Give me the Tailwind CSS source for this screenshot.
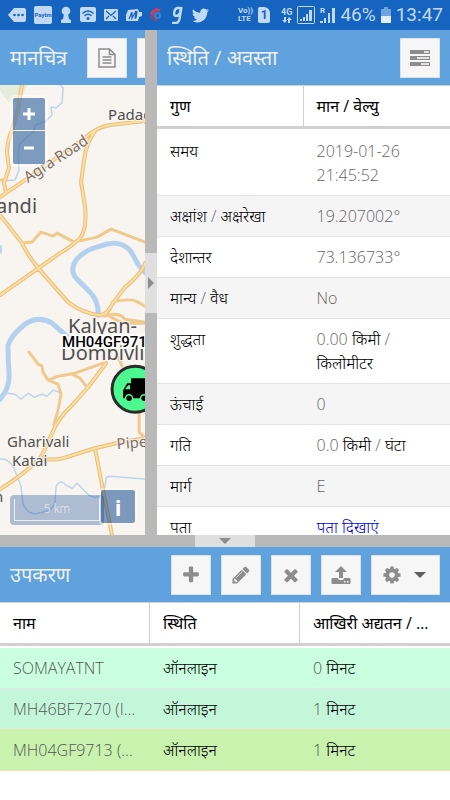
<!DOCTYPE html>
<html lang="hi">
<head>
    <meta charset="UTF-8">
    <meta name="viewport" content="width=device-width, initial-scale=1.0">
    <title>मानचित्र</title>
    <script src="https://cdn.jsdelivr.net/npm/@tailwindcss/browser@4"></script>
    <style>
        body { font-family: 'Open Sans', 'Noto Sans Devanagari', 'Noto Sans', sans-serif; }
    </style>
</head>
<body class="h-screen flex flex-col bg-white text-base leading-6 text-black overflow-hidden">
    <!-- Phone status bar -->
    <div class="h-[30px] shrink-0 flex items-center justify-between pl-2 pr-[7px] bg-[#1464c0] text-[#c2d9f3] font-['Roboto',sans-serif]">
        <div class="flex items-center gap-2">
            <svg class="w-[18px] h-4" viewBox="0 0 18 16" fill="currentColor"><path d="M6 1h10q2 0 2 2v10q0 2-2 2H6L0 8z"/><g fill="#1464c0"><circle cx="6.500" cy="8" r="1.300"/><circle cx="10.500" cy="8" r="1.300"/><circle cx="14.500" cy="8" r="1.300"/></g></svg>
            <span class="w-[18px] h-[18px] rounded-xs bg-[#c2d9f3] text-[#1464c0] text-[6px] font-bold flex items-center justify-center">Paytm</span>
            <svg class="w-3 h-[18px]" viewBox="0 0 12 18" fill="currentColor"><circle cx="6" cy="5" r="4.300"/><path d="M4 8h4l1 5 2 1v3H1v-3l2-1z"/></svg>
            <svg class="w-4 h-4" viewBox="0 0 16 16"><rect width="16" height="15" rx="2" fill="currentColor"/><g fill="none" stroke="#1464c0" stroke-width="1.400"><path d="M2.500 6.500q5.500-5 11 0M4.500 8.800q3.500-3 7 0"/></g><circle cx="8" cy="11.500" r="1.500" fill="#1464c0"/></svg>
            <svg class="w-3.5 h-3" viewBox="0 0 14 12"><rect width="14" height="12" rx="1" fill="currentColor"/><path d="M2 2l5 4.500L12 2M2 10l3-3M12 10L9 7" fill="none" stroke="#1464c0" stroke-width="1.300"/></svg>
            <svg class="w-4 h-3.5" viewBox="0 0 16 14"><path d="M2 2l10-1 1 3h3v4l-3 1-1 4H0V7z" fill="currentColor"/><path d="M3 11l3-7v6l4-7-1 8M11 3l-1 7" fill="none" stroke="#1464c0" stroke-width="1.200"/></svg>
            <svg class="w-3 h-3.5" viewBox="0 0 12 14" fill="none" stroke-width="3"><path d="M10 3A5 5 0 0 0 2 8" stroke="#c83f5d"/><path d="M2 7a5 5 0 0 0 5 5" stroke="#93426f"/><circle cx="7.500" cy="7.500" r="2.500" stroke="#3b82cc" stroke-width="2"/></svg>
            <svg class="w-3.5 h-[18px]" viewBox="0 0 14 18" fill="none" stroke="currentColor" stroke-width="2.400"><path d="M10 2H8Q5 2 4.300 6T6 10q2.500 0 4-3l1.200-6M11.500 1L9.500 13q-.8 4-4 4H2"/></svg>
            <svg class="w-[17px] h-[17px]" viewBox="0 0 24 24" fill="currentColor"><path d="M23.950 4.570a10 10 0 0 1-2.820.77 4.960 4.960 0 0 0 2.160-2.720c-.95.56-2 .96-3.120 1.190a4.920 4.920 0 0 0-8.390 4.480C7.690 8.090 4.070 6.130 1.640 3.160a4.900 4.900 0 0 0 1.520 6.570 4.900 4.900 0 0 1-2.230-.61v.06a4.920 4.920 0 0 0 3.950 4.830 5 5 0 0 1-2.210.08 4.940 4.940 0 0 0 4.600 3.420A9.870 9.870 0 0 1 0 19.540a13.990 13.990 0 0 0 7.550 2.210c9.050 0 14-7.500 14-13.980 0-.21 0-.42-.02-.63a9.940 9.940 0 0 0 2.460-2.550z"/></svg>
        </div>
        <div class="flex items-center gap-[5px]">
            <span class="text-[8px] leading-[8px] font-bold">Vo))<br>LTE</span>
            <span class="w-3 h-4 rounded-xs rounded-tr-md bg-[#c2d9f3] text-[#1464c0] text-xs leading-4 font-bold text-center">1</span>
            <span class="pl-1.5 text-[9px] leading-[9px] font-bold text-center">4G<svg class="w-2.5 h-1.5 mx-auto" viewBox="0 0 10 6" fill="currentColor"><path d="M2 0h2v3h1L3 6 0 3h2zM6 6h2V3h2L7 0 5 3h1z"/></svg></span>
            <svg class="w-[18px] h-[18px]" viewBox="0 0 18 18" fill="currentColor"><rect x=".5" y=".5" width="17" height="17" rx="1" fill="none" stroke="currentColor"/><path d="M3 15v-2h2v2zM6 15v-4h2v4zM9 15V8h2v7zM12 15V4h3v11z"/></svg>
            <svg class="w-[15px] h-[18px]" viewBox="0 0 15 18"><path d="M0 17v-2h3v2zM4 17v-5h2v5zM8 17V7h2v10zM12 17V2h3v15z" fill="currentColor"/><text x="0" y="7" font-size="8" font-weight="700" fill="currentColor">R</text></svg>
            <span class="text-[19px] leading-6">46%</span>
            <svg class="w-2.5 h-4" viewBox="0 0 10 16"><path d="M3 0h4v2h3v14H0V2h3z" fill="#6ea3de"/><path d="M0 9h10v7H0z" fill="#e4eefa"/></svg>
            <span class="text-[19px] leading-6">13:47</span>
        </div>
    </div>

    <div class="flex-2 min-h-0 flex">
        <!-- Map -->
        <section class="w-[145px] shrink-0 flex flex-col overflow-hidden">
            <header class="h-[55px] shrink-0 flex items-center gap-2.5 px-2.5 bg-[#5fa2dd]">
                <h2 class="w-[67px] shrink-0 text-xl text-[#f0f0f0] whitespace-nowrap">मानचित्र</h2>
                <button type="button" aria-label="रिपोर्ट" class="w-10 h-10 shrink-0 flex items-center justify-center bg-[#f6f6f6] border border-[#e0e0e0] text-[#8d8d8d]">
                    <svg class="w-[18px] h-5" viewBox="0 0 18 20" fill="none" stroke="currentColor" stroke-width="1.500"><path d="M1 1h10.500L17 6.500V19H1zM11.500 1v5.500H17M4.500 9h9M4.500 12h9M4.500 15h9"/></svg>
                </button>
                <button type="button" aria-label="सेटिंग" class="w-10 h-10 shrink-0 bg-[#f6f6f6] border border-[#e0e0e0]"></button>
            </header>
            <div class="relative flex-1 min-h-0 bg-[#f8f4f0]">
                <svg class="w-full h-full" viewBox="0 0 145 450" preserveAspectRatio="xMinYMin slice" fill="none" stroke-linejoin="round" stroke-linecap="round">
                    <path d="M0 0H27Q24 14 12 19Q4 14 0 5z" fill="#e6ecd9"/>
                    <!-- rivers -->
                    <g stroke="#b3d1ee" stroke-width="5">
                        <path d="M98 230Q99 217 90 207L77 194Q69 186 76 175Q84 165 100 161Q118 154 129 164C136 173 137 182 146 188"/>
                        <path d="M0 314Q10 303 9 288T8 260Q11 250 25 239Q38 230 52 238L69 253"/>
                    </g>
                    <g stroke="#bdd5ec" stroke-width="1.500">
                        <path d="M60 0l3 3-1 15-6 5-5-1 1 8-6 6-10 4-3 7-6 5-8 8-1 12 1 13-4 10-13 1"/>
                        <path d="M0 313l7-5 8 1 6 5 7-6 6 4 8-3 5 2 6-6 7 2M0 374q8-2 14 9l7 18 2 18q6 13 19 8 10-1 13-10l1-16q5-8 10-1l6 3 5-5 12 12q16 8 17-18l4-1 37 3"/>
                        <path d="M0 162v5" stroke-width="4"/>
                    </g>
                    <!-- roads, casing under fill -->
                    <g stroke="#e9bd7c" stroke-width="4">
                        <path d="M0 112L25 95L86 52Q97 42 110 40L145 36M95 46Q86 58 84 75L81 97L85 122Q87 144 80 153Q72 161 60 168L0 210M22 0Q20 12 18 24L12 45Q7 56 7 68L9 83L4 98L6 108M0 130L22 158Q28 171 39 184L68 217Q84 229 100 230Q108 229 112 219L125 202Q142 188 145 178"/>
                        <path d="M106 278L88 302L72 320Q58 333 52 348L42 370Q31 384 0 404M40 373Q56 376 66 372L95 363L120 357L145 353M95 363L102 400L112 450"/>
                    </g>
                    <g stroke="#efc98e" stroke-width="3">
                        <path d="M22 158l10-1 9-10 12 4 4-3 17 9 23-5 14-8 34 13M0 95h6M112 217q16-4 24-1l9 5M104 231q14-5 21 3l20 3M106 229q10 6 18 9h21M29 267l9 12 4 2 1 6 5 8 10-4 17-3 28-10M48 295l10 4 3 10-3 16-4 14M72 289l8 4 7 9M139 325v22l6 5M118 272l4 9"/>
                    </g>
                    <g stroke="#fadf9f" stroke-width="2">
                        <path d="M0 112L25 95L86 52Q97 42 110 40L145 36M95 46Q86 58 84 75L81 97L85 122Q87 144 80 153Q72 161 60 168L0 210M22 0Q20 12 18 24L12 45Q7 56 7 68L9 83L4 98L6 108M0 130L22 158Q28 171 39 184L68 217Q84 229 100 230Q108 229 112 219L125 202Q142 188 145 178"/>
                        <path d="M106 278L88 302L72 320Q58 333 52 348L42 370Q31 384 0 404M40 373Q56 376 66 372L95 363L120 357L145 353M95 363L102 400L112 450"/>
                    </g>
                    <!-- place names -->
                    <g fill="#505050" stroke="#f8f4f0" stroke-width="2" paint-order="stroke" font-family="Noto Sans">
                        <text x="108" y="35" font-size="15">Padagha</text>
                        <text x="-4" y="128" font-size="20">andi</text>
                        <text x="68" y="248" font-size="20">Kalyan-</text>
                        <text x="61" y="275" font-size="20">Dombivli</text>
                        <text x="7" y="362" font-size="15">Gharivali</text>
                        <text x="12" y="381" font-size="15">Katai</text>
                        <text x="-6" y="417" font-size="15">n</text>
                        <text transform="translate(28 98) rotate(-33)" fill="#7c6f65" font-size="15">Agra Road</text>
                        <text transform="translate(117 364) rotate(-5)" fill="#7c6f65" font-size="15">Pipeline</text>
                    </g>
                    <!-- vehicle marker -->
                    <circle cx="135" cy="304" r="23" fill="#4dfa90" stroke="#2b2b2b" stroke-width="3"/>
                    <path d="M131 293h24v20h-32v-8l4-7h4z" fill="#000"/>
                    <path d="M125 304l3-4h2v4z" fill="#4dfa90"/>
                    <g fill="#000" stroke="#4dfa90" stroke-width="1.500"><circle cx="129" cy="313" r="3.500"/><circle cx="144" cy="313" r="3.500"/></g>
                    <text x="62" y="262" font-size="15" font-weight="500" font-family="Roboto" fill="#000" stroke="#fff" stroke-width="4" paint-order="stroke">MH04GF9713</text>
                </svg>
                <div class="absolute left-2.5 top-2.5 p-[3px] rounded bg-white/40 flex flex-col gap-px text-white">
                    <button type="button" class="w-8 h-8 rounded-t-xs bg-[#003c88]/50 flex items-center justify-center" aria-label="Zoom in"><svg class="w-3 h-3" viewBox="0 0 12 12" fill="currentColor"><path d="M4.500 0h3v4.500H12v3H7.500V12h-3V7.500H0v-3h4.500z"/></svg></button>
                    <button type="button" class="w-8 h-[33px] rounded-b-xs bg-[#003c88]/50 flex items-center justify-center" aria-label="Zoom out"><svg class="w-3 h-3" viewBox="0 0 12 12" fill="currentColor"><path d="M1 4.500h10v3H1z"/></svg></button>
                </div>
                <div class="absolute left-2.5 bottom-2.5 w-[94px] h-[30px] rounded bg-[#003c88]/30 p-1">
                    <div class="h-[22px] border border-t-0 border-[#eee] text-xs leading-5 text-center text-[#eee] font-light">5 km</div>
                </div>
                <button type="button" class="absolute right-2 bottom-2.5 w-[38px] h-[37px] rounded border-2 border-white/40 bg-[#003c88]/50 bg-clip-padding text-[22px] leading-6 font-bold text-white" aria-label="Attributions">i</button>
            </div>
        </section>

        <div class="w-3 shrink-0 flex items-center bg-[#b9b9b9]">
            <button type="button" aria-label="Collapse" class="w-3 h-15 flex items-center justify-center bg-[#dfdfdf] text-[#8c8c8c]"><svg class="w-1.5 h-3" viewBox="0 0 6 12" fill="currentColor"><path d="M0 0l6 6-6 6z"/></svg></button>
        </div>

        <!-- State -->
        <section class="flex-1 min-w-0 flex flex-col overflow-hidden">
            <header class="h-[55px] shrink-0 flex items-center justify-between px-2.5 bg-[#5fa2dd]">
                <h2 class="text-xl text-[#f0f0f0]">स्थिति / अवस्ता</h2>
                <button type="button" aria-label="विशेषताएँ" class="w-10 h-10 flex items-center justify-center bg-[#f6f6f6] border border-[#e0e0e0] text-[#8d8d8d]">
                    <svg class="w-5 h-4" viewBox="0 0 20 16"><path d="M0 0h20v4H0zM0 6h20v4H0zM0 12h20v4H0z" fill="currentColor"/><path d="M14 1h5v2h-5zM7 7h12v2H7zM11 13h8v2h-8z" fill="#e2e2e2"/></svg>
                </button>
            </header>
            <table class="w-full table-fixed border-separate border-spacing-0 text-left border-t border-[#d0d0d0]">
                <thead>
                    <tr>
                        <th class="px-[13px] py-2 font-normal border-b-3 border-r border-[#d0d0d0]">गुण</th>
                        <th class="px-[13px] py-2 font-normal border-b-3 border-[#d0d0d0]">मान / वेल्यु</th>
                    </tr>
                </thead>
                <tbody class="align-top font-light before:table-row before:h-0.5">
                    <tr><td class="px-[13px] py-2 border-b border-[#e4e4e4]">समय</td><td class="px-[13px] py-2 border-b border-[#e4e4e4] text-[#666]">2019-01-26 21:45:52</td></tr>
                    <tr class="bg-[#f5f5f5]"><td class="px-[13px] py-2 border-b border-[#e4e4e4]">अक्षांश <span class="text-[#666]">/</span> अक्षरेखा</td><td class="px-[13px] py-2 border-b border-[#e4e4e4] text-[#666]">19.207002°</td></tr>
                    <tr><td class="px-[13px] py-2 border-b border-[#e4e4e4]">देशान्तर</td><td class="px-[13px] py-2 border-b border-[#e4e4e4] text-[#666]">73.136733°</td></tr>
                    <tr class="bg-[#f5f5f5]"><td class="px-[13px] py-2 border-b border-[#e4e4e4]">मान्य <span class="text-[#666]">/</span> वैध</td><td class="px-[13px] py-2 border-b border-[#e4e4e4] text-[#666]">No</td></tr>
                    <tr><td class="px-[13px] py-2 border-b border-[#e4e4e4]">शुद्धता</td><td class="px-[13px] py-2 border-b border-[#e4e4e4]"><span class="text-[#666]">0.00</span> किमी <span class="text-[#666]">/</span> किलोमीटर</td></tr>
                    <tr class="bg-[#f5f5f5]"><td class="px-[13px] py-2 border-b border-[#e4e4e4]">ऊंचाई</td><td class="px-[13px] py-2 border-b border-[#e4e4e4] text-[#666]">0</td></tr>
                    <tr><td class="px-[13px] py-2 border-b border-[#e4e4e4]">गति</td><td class="px-[13px] py-2 border-b border-[#e4e4e4]"><span class="text-[#666]">0.0</span> किमी <span class="text-[#666]">/</span> घंटा</td></tr>
                    <tr class="bg-[#f5f5f5]"><td class="px-[13px] py-2 border-b border-[#e4e4e4]">मार्ग</td><td class="px-[13px] py-2 border-b border-[#e4e4e4] text-[#666]">E</td></tr>
                    <tr><td class="px-[13px] py-2">पता</td><td class="px-[13px] py-2"><a href="#" class="text-[#0000ee]">पता दिखाएं</a></td></tr>
                </tbody>
            </table>
        </section>
    </div>

    <div class="h-3 shrink-0 flex justify-center bg-[#b9b9b9]">
        <button type="button" aria-label="Collapse" class="w-15 h-3 flex items-center justify-center bg-[#dfdfdf] text-[#8c8c8c]"><svg class="w-3 h-1.5" viewBox="0 0 12 6" fill="currentColor"><path d="M0 0h12L6 6z"/></svg></button>
    </div>

    <!-- Devices -->
    <section class="flex-1 min-h-0 flex flex-col overflow-hidden">
        <header class="h-[55px] shrink-0 flex items-center gap-2.5 px-2.5 bg-[#5fa2dd] text-[#8d8d8d]">
            <h2 class="flex-1 text-xl text-[#f0f0f0]">उपकरण</h2>
            <button type="button" aria-label="जोड़ें" class="w-10 h-10 flex items-center justify-center bg-[#f6f6f6] border border-[#e0e0e0]">
                <svg class="w-5 h-5" viewBox="0 0 1792 1792" fill="currentColor"><path d="M1600 736v192q0 40-28 68t-68 28h-416v416q0 40-28 68t-68 28h-192q-40 0-68-28t-28-68v-416h-416q-40 0-68-28t-28-68v-192q0-40 28-68t68-28h416v-416q0-40 28-68t68-28h192q40 0 68 28t28 68v416h416q40 0 68 28t28 68z"/></svg>
            </button>
            <button type="button" aria-label="संपादित करें" class="w-10 h-10 flex items-center justify-center bg-[#f6f6f6] border border-[#e0e0e0]">
                <svg class="w-5 h-5" viewBox="0 0 1792 1792" fill="currentColor"><path d="M491 1536l91-91-235-235-91 91v107h128v128h107zm523-928q0-22-22-22-10 0-17 7l-542 542q-7 7-7 17 0 22 22 22 10 0 17-7l542-542q7-7 7-17zm-54-192l416 416-832 832h-416v-416zm683 96q0 53-37 90l-166 166-416-416 166-165q36-38 90-38 53 0 91 38l235 234q37 39 37 91z"/></svg>
            </button>
            <button type="button" aria-label="हटाएँ" class="w-10 h-10 flex items-center justify-center bg-[#f6f6f6] border border-[#e0e0e0]">
                <svg class="w-5 h-5" viewBox="0 0 1792 1792" fill="currentColor"><path d="M1490 1322q0 40-28 68l-136 136q-28 28-68 28t-68-28l-294-294-294 294q-28 28-68 28t-68-28l-136-136q-28-28-28-68t28-68l294-294-294-294q-28-28-28-68t28-68l136-136q28-28 68-28t68 28l294 294 294-294q28-28 68-28t68 28l136 136q28 28 28 68t-28 68l-294 294 294 294q28 28 28 68z"/></svg>
            </button>
            <button type="button" aria-label="आदेश भेजें" class="w-10 h-10 flex items-center justify-center bg-[#f6f6f6] border border-[#e0e0e0]">
                <svg class="w-5 h-5" viewBox="0 0 20 20" fill="currentColor"><path d="M10 1l6 6h-4v6H8V7H4z"/><path d="M1.500 13H7q0 2 3 2t3-2h5.500q1 0 1 1v4q0 1-1 1h-17q-1 0-1-1v-4q0-1 1-1z"/><path d="M13 16h1.500v1.500H13zM16 16h1.500v1.500H16z" fill="#f6f6f6"/></svg>
            </button>
            <button type="button" aria-label="सेटिंग" class="w-[69px] h-10 pr-1 flex items-center justify-center gap-3 bg-[#f6f6f6] border border-[#e0e0e0]">
                <svg class="w-5 h-5" viewBox="0 0 1792 1792" fill="currentColor"><path d="M1152 896q0-106-75-181t-181-75-181 75-75 181 75 181 181 75 181-75 75-181zm512-109v222q0 12-8 23t-20 13l-185 28q-19 54-39 91 35 50 107 138 10 12 10 25t-9 23q-27 37-99 108t-94 71q-12 0-26-9l-138-108q-44 23-91 38-16 136-29 186-7 28-36 28h-222q-14 0-24.500-8.500t-11.500-21.500l-28-184q-49-16-90-37l-141 107q-10 9-25 9-14 0-25-11-126-114-165-168-7-10-7-23 0-12 8-23 15-21 51-66.500t54-70.500q-27-50-41-99l-183-27q-13-2-21-12.500t-8-23.500v-222q0-12 8-23t19-13l186-28q14-46 39-92-40-57-107-138-10-12-10-24 0-10 9-23 26-36 98.500-107.500t94.500-71.500q13 0 26 10l138 107q44-23 91-38 16-136 29-186 7-28 36-28h222q14 0 24.500 8.500t11.500 21.500l28 184q49 16 90 37l142-107q9-9 24-9 13 0 25 10 129 119 165 170 7 8 7 22 0 12-8 23-15 21-51 66.500t-54 70.500q26 50 41 98l183 28q13 2 21 12.500t8 23.500z"/></svg>
                <svg class="w-3 h-1.5 text-[#606060]" viewBox="0 0 12 6" fill="currentColor"><path d="M0 0h12L6 6z"/></svg>
            </button>
        </header>
        <table class="w-full table-fixed border-separate border-spacing-0 text-left border-t border-[#d0d0d0]">
            <thead>
                <tr>
                    <th class="px-[13px] py-2 font-normal border-b-3 border-r border-[#d0d0d0]">नाम</th>
                    <th class="px-[13px] py-2 font-normal border-b-3 border-r border-[#d0d0d0]">स्थिति</th>
                    <th class="px-[13px] py-2 font-normal border-b-3 border-[#d0d0d0] truncate">आखिरी अद्यतन / अपडेट</th>
                </tr>
            </thead>
            <tbody class="font-light before:table-row before:h-0.5">
                <tr class="bg-[#caffdf]"><td class="px-[13px] py-2 border-b border-[#e4e4e4] truncate text-[#555]">SOMAYATNT</td><td class="px-[13px] py-2 border-b border-[#e4e4e4]">ऑनलाइन</td><td class="px-[13px] py-2 border-b border-[#e4e4e4]"><span class="text-[#555]">0</span> मिनट</td></tr>
                <tr class="bg-[#c4f7da]"><td class="px-[13px] py-2 border-b border-[#f5deb3] truncate text-[#555]">MH46BF7270 (Indica)</td><td class="px-[13px] py-2 border-b border-[#f5deb3]">ऑनलाइन</td><td class="px-[13px] py-2 border-b border-[#f5deb3]"><span class="text-[#555]">1</span> मिनट</td></tr>
                <tr class="bg-[#c9f2ae]"><td class="px-[13px] py-2 border-b border-[#f5deb3] truncate text-[#555]">MH04GF9713 (Truck)</td><td class="px-[13px] py-2 border-b border-[#f5deb3]">ऑनलाइन</td><td class="px-[13px] py-2 border-b border-[#f5deb3]"><span class="text-[#555]">1</span> मिनट</td></tr>
            </tbody>
        </table>
    </section>
</body>
</html>
